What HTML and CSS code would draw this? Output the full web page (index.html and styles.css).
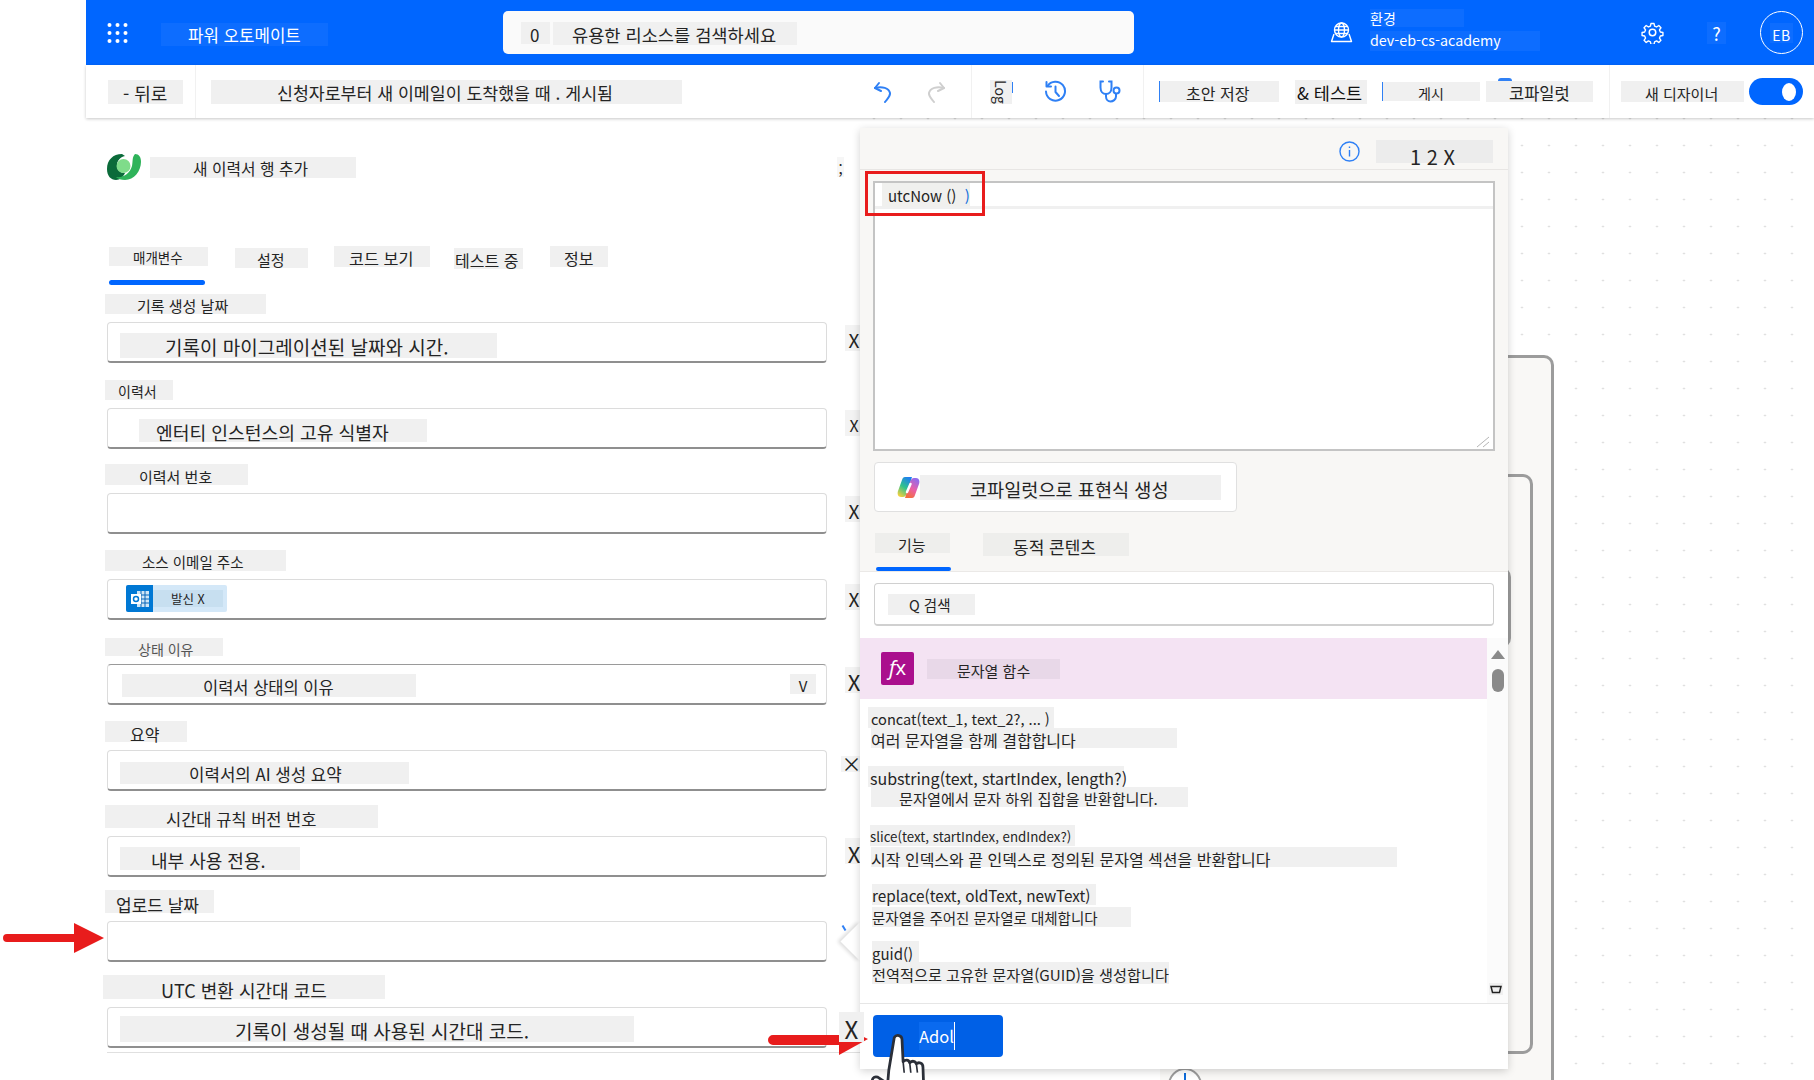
FILE: index.html
```html
<!DOCTYPE html>
<html lang="ko">

<head>
    <meta charset="UTF-8">
    <title>파워 오토메이트</title>
    <link rel="stylesheet" href="styles.css">
</head>

<body>
    <div class="app">
        <!-- 상단 파란 헤더 -->
        <header class="topbar">
            <svg class="waffle" width="21" height="20" viewBox="0 0 21 20" fill="#fff">
                <circle cx="2.5" cy="2" r="2"/><circle cx="10.5" cy="2" r="2"/><circle cx="18.5" cy="2" r="2"/>
                <circle cx="2.5" cy="10" r="2"/><circle cx="10.5" cy="10" r="2"/><circle cx="18.5" cy="10" r="2"/>
                <circle cx="2.5" cy="18" r="2"/><circle cx="10.5" cy="18" r="2"/><circle cx="18.5" cy="18" r="2"/>
            </svg>
            <div class="hl-blue brand">파워 오토메이트</div>
            <div class="searchbox">
                <span class="hl search-zero">0</span>
                <span class="hl search-text">유용한 리소스를 검색하세요</span>
            </div>
            <svg class="globe" width="23" height="21" viewBox="0 0 23 21" fill="none" stroke="#fff" stroke-width="1.4">
                <circle cx="11.5" cy="8" r="7"/>
                <ellipse cx="11.5" cy="8" rx="3" ry="7"/>
                <path d="M4.5 8h14M5.5 4.5h12M5.5 11.5h12"/>
                <path d="M4 12L1.5 19.5h20L19 12" stroke-linejoin="round"/>
            </svg>
            <div class="env">
                <div class="hl-blue env-label">환경</div>
                <div class="hl-blue env-name">dev-eb-cs-academy</div>
            </div>
            <svg class="gear" width="23" height="23" viewBox="0 0 24 24" fill="none" stroke="#fff" stroke-width="1.6" stroke-linejoin="round">
                <circle cx="12" cy="12" r="3.4"/>
                <path d="M10.2 1.6h3.6l.6 3 2.3 1 2.6-1.7 2.5 2.6-1.7 2.5 1 2.4 3 .6v3.5l-3 .6-1 2.3 1.7 2.6-2.5 2.5-2.6-1.7-2.3 1-.6 3h-3.6l-.6-3-2.3-1-2.6 1.7-2.5-2.5 1.7-2.6-1-2.3-3-.6v-3.5l3-.6 1-2.4-1.7-2.5 2.5-2.6 2.6 1.7 2.3-1z" transform="translate(1.2 1.2) scale(.9)"/>
            </svg>
            <div class="hl-blue help">?</div>
            <div class="avatar"><span class="hl-blue avatar-text">EB</span></div>
        </header>

        <!-- 도구 모음 -->
        <nav class="toolbar">
            <div class="hl back">- 뒤로</div>
            <i class="sep sep-a"></i>
            <div class="hl flow-title">신청자로부터 새 이메일이 도착했을 때 . 게시됨</div>
            <svg class="ico undo" width="20" height="22" viewBox="0 0 20 22" fill="none" stroke="#2f80f5" stroke-width="2" stroke-linecap="round" stroke-linejoin="round">
                <path d="M6 2L2 7l6 3"/>
                <path d="M2 7c7-2 14 0 15 5 .5 3-2 5-5 9"/>
            </svg>
            <svg class="ico redo" width="20" height="22" viewBox="0 0 20 22" fill="none" stroke="#cfcfcf" stroke-width="2" stroke-linecap="round" stroke-linejoin="round">
                <path d="M14 2l4 5-6 3"/>
                <path d="M18 7C11 5 4 7 3 12c-.5 3 2 5 5 9"/>
            </svg>
            <i class="sep sep-b"></i>
            <div class="hl log"><span class="log-text">Log</span></div>
            <svg class="ico history" width="23" height="23" viewBox="0 0 23 23" fill="none" stroke="#2f80f5" stroke-width="2" stroke-linecap="round" stroke-linejoin="round">
                <path d="M3.5 6A9.5 9.5 0 1 1 2 11.500"/>
                <path d="M2.500 2v4.500H7"/>
                <path d="M11.500 6.500v5.500l3.500 4"/>
            </svg>
            <svg class="ico stetho" width="24" height="23" viewBox="0 0 24 23" fill="none" stroke="#2f80f5" stroke-width="2" stroke-linecap="round">
                <path d="M5 1.500H2.500v6c0 4 2.500 6.500 5.500 6.500s5.500-2.500 5.500-6.500v-6H11"/>
                <path d="M8 14v2.500c0 3 2 5 4.500 5s5.500-2 5.500-5V14"/>
                <circle cx="18.500" cy="10.500" r="3"/>
            </svg>
            <i class="sep sep-c"></i>
            <div class="hl draft">초안 저장</div>
            <div class="hl test">&amp; 테스트</div>
            <div class="hl publish">게시</div>
            <div class="hl copilot">코파일럿</div>
            <i class="sep sep-d"></i>
            <div class="hl designer">새 디자이너</div>
            <div class="toggle"><i></i></div>
        </nav>

        <main class="workspace">
            <!-- 왼쪽 작업 설정 -->
            <section class="form">
                <div class="form-head">
                    <svg class="dv-logo" width="34" height="26" viewBox="0 0 34 26">
                        <path d="M15 0C6 0 0 6 0 15c0 7 4 11 9 11 4 0 7-3 9-7-5 0-8-3-8-8 0-4 3-8 8-9z" fill="#0b6b3a"/>
                        <path d="M28 0c4 0 6 3 6 8 0 9-7 18-16 18-4 0-7-1-9-3 8 1 14-4 16-11 1-5 0-9 3-12z" fill="#2fb35a"/>
                        <circle cx="16.500" cy="12" r="7" fill="#7fdc8a"/>
                    </svg>
                    <div class="hl head-title">새 이력서 행 추가</div>
                    <div class="hl head-more">;</div>
                </div>
                <div class="tabs">
                    <div class="hl tab-params">매개변수</div>
                    <div class="hl tab-settings">설정</div>
                    <div class="hl tab-code">코드 보기</div>
                    <div class="hl tab-test">테스트 중</div>
                    <div class="hl tab-about">정보</div>
                </div>
                <div class="tab-line"></div>

                <div class="field">
                    <div class="field-top"><label class="hl lb-created">기록 생성 날짜</label></div>
                    <div class="field-row">
                        <div class="input"><span class="hl val val-created">기록이 마이그레이션된 날짜와 시간.</span></div>
                        <span class="hl clear">X</span>
                    </div>
                </div>
                <div class="field">
                    <div class="field-top"><label class="hl lb-resume">이력서</label></div>
                    <div class="field-row">
                        <div class="input"><span class="hl val val-resume">엔터티 인스턴스의 고유 식별자</span></div>
                        <span class="hl clear clear-sm">X</span>
                    </div>
                </div>
                <div class="field">
                    <div class="field-top"><label class="hl lb-number">이력서 번호</label></div>
                    <div class="field-row">
                        <div class="input"></div>
                        <span class="hl clear">X</span>
                    </div>
                </div>
                <div class="field">
                    <div class="field-top"><label class="hl lb-source">소스 이메일 주소</label></div>
                    <div class="field-row">
                        <div class="input">
                            <div class="chip">
                                <span class="chip-icon">
                                    <svg width="20" height="18" viewBox="0 0 20 18">
                                        <rect x="7" y="1" width="12" height="16" fill="#cfe6f7"/>
                                        <path d="M7 5h12M7 9h12M7 13h12M11 1v16M15 1v16" stroke="#0a66b8" stroke-width="1"/>
                                        <rect x="1" y="4" width="10" height="10" fill="#fff"/>
                                        <circle cx="6" cy="9" r="2.500" fill="none" stroke="#0078d4" stroke-width="1.500"/>
                                    </svg>
                                </span>
                                <span class="chip-text">발신 X</span>
                            </div>
                        </div>
                        <span class="hl clear clear-low">X</span>
                    </div>
                </div>
                <div class="field">
                    <div class="field-top"><label class="hl lb-status">상태 이유</label></div>
                    <div class="field-row">
                        <div class="input input-select">
                            <span class="hl val-status">이력서 상태의 이유</span>
                            <span class="hl caret">V</span>
                        </div>
                        <span class="hl clear clear-big">X</span>
                    </div>
                </div>
                <div class="field">
                    <div class="field-top"><label class="hl lb-summary">요약</label></div>
                    <div class="field-row">
                        <div class="input"><span class="hl val val-summary">이력서의 AI 생성 요약</span></div>
                        <span class="hl clear clear-x">×</span>
                    </div>
                </div>
                <div class="field">
                    <div class="field-top"><label class="hl lb-rule">시간대 규칙 버전 번호</label></div>
                    <div class="field-row">
                        <div class="input"><span class="hl val val-rule">내부 사용 전용.</span></div>
                        <span class="hl clear clear-big">X</span>
                    </div>
                </div>
                <div class="field">
                    <div class="field-top"><label class="hl lb-upload">업로드 날짜</label></div>
                    <div class="field-row">
                        <div class="input"></div>
                        <i class="tick"></i>
                    </div>
                </div>
                <div class="field">
                    <div class="field-top"><label class="hl lb-utc">UTC 변환 시간대 코드</label></div>
                    <div class="field-row">
                        <div class="input"><span class="hl val-utc">기록이 생성될 때 사용된 시간대 코드.</span></div>
                    </div>
                </div>
                <div class="form-end"></div>
            </section>

            <!-- 캔버스 -->
            <section class="canvas">
                <div class="node node-outer"></div>
                <div class="node node-mid"></div>
                <div class="node node-inner"></div>
                <div class="add-step"></div>
            </section>

            <!-- 표현식 패널 -->
            <aside class="panel">
                <div class="panel-top">
                    <div class="panel-head">
                        <svg width="21" height="21" viewBox="0 0 21 21" fill="none" stroke="#2f80f5" stroke-width="1.400">
                            <circle cx="10.500" cy="10.500" r="9.500"/>
                            <path d="M10.500 9v6.500M10.500 5.500v1.500"/>
                        </svg>
                        <div class="hl panel-close">1 2 X</div>
                    </div>
                    <div class="expr">
                        <div class="expr-line">
                            <span class="expr-chip">utcNow () <b>)</b></span>
                        </div>
                        <svg class="grip" width="14" height="12" viewBox="0 0 14 12" stroke="#b5b5b5" fill="none">
                            <path d="M1 11L13 1M7 11l6-5"/>
                        </svg>
                    </div>
                    <div class="copilot-btn">
                        <svg width="23" height="23" viewBox="0 0 23 23">
                            <defs>
                                <linearGradient id="cpA" x1="0.700" y1="0" x2="0.200" y2="1">
                                    <stop offset="0" stop-color="#1f7ff0"/>
                                    <stop offset=".5" stop-color="#2fc28c"/>
                                    <stop offset="1" stop-color="#f7d13c"/>
                                </linearGradient>
                                <linearGradient id="cpB" x1="0.800" y1="0" x2="0.300" y2="1">
                                    <stop offset="0" stop-color="#8a6cf2"/>
                                    <stop offset=".55" stop-color="#ea5fa6"/>
                                    <stop offset="1" stop-color="#f4703a"/>
                                </linearGradient>
                            </defs>
                            <path d="M8 1h7l-5 16c-.7 2-2 4-4 4H4c-3 0-4-3-3-6L5 4c.5-2 1.500-3 3-3z" fill="url(#cpA)"/>
                            <path d="M15 22H8l5-16c.7-2 2-4 4-4h2c3 0 4 3 3 6l-4 11c-.5 2-1.500 3-3 3z" fill="url(#cpB)"/>
                            <path d="M13.500 8l-3.500 8" stroke="#fff" stroke-width="2.500" stroke-linecap="round"/>
                        </svg>
                        <div class="hl copilot-text">코파일럿으로 표현식 생성</div>
                    </div>
                    <div class="panel-tabs">
                        <div class="hl ptab-fn">기능</div>
                        <div class="hl ptab-dyn">동적 콘텐츠</div>
                    </div>
                    <div class="ptab-line"></div>
                </div>
                <div class="panel-search-wrap">
                    <div class="input panel-search"><span class="hl search-q">Q 검색</span></div>
                </div>
                <div class="fn-area">
                    <div class="fn-main">
                        <div class="fn-head">
                            <span class="fx"><i>f</i>x</span>
                            <span class="fn-title">문자열 함수</span>
                        </div>
                        <div class="fn-item fn-concat">
                            <div class="hl sig">concat(text_1, text_2?, ... )</div>
                            <div class="hl desc">여러 문자열을 함께 결합합니다</div>
                        </div>
                        <div class="fn-item fn-sub">
                            <div class="hl sig">substring(text, startIndex, length?)</div>
                            <div class="hl desc">문자열에서 문자 하위 집합을 반환합니다.</div>
                        </div>
                        <div class="fn-item fn-slice">
                            <div class="hl sig">slice(text, startIndex, endIndex?)</div>
                            <div class="hl desc">시작 인덱스와 끝 인덱스로 정의된 문자열 섹션을 반환합니다</div>
                        </div>
                        <div class="fn-item fn-replace">
                            <div class="hl sig">replace(text, oldText, newText)</div>
                            <div class="hl desc">문자열을 주어진 문자열로 대체합니다</div>
                        </div>
                        <div class="fn-item fn-guid">
                            <div class="hl sig">guid()</div>
                            <div class="hl desc">전역적으로 고유한 문자열(GUID)을 생성합니다</div>
                        </div>
                    </div>
                    <div class="fn-scroll">
                        <i class="arrow-up"></i>
                        <i class="thumb"></i>
                        <span class="arrow-down">
                            <svg width="12" height="9" viewBox="0 0 12 9" fill="none" stroke="#222" stroke-width="1.500">
                                <path d="M1 1.500h10L9.500 7.500h-7z"/>
                            </svg>
                        </span>
                    </div>
                </div>
                <div class="panel-foot">
                    <button class="add-btn"><span>Adol</span></button>
                </div>
            </aside>
            <div class="notch"></div>

            <!-- 표시 -->
            <div class="red-box"></div>
            <svg class="red-arrow arrow-a" width="101" height="30" viewBox="0 0 101 30">
                <path d="M4 11h67V0l30 15-30 15V19H4a4 4 0 0 1 0-8z" fill="#e81c1c"/>
            </svg>
            <svg class="red-arrow arrow-b" width="100" height="30" viewBox="0 0 100 30">
                <path d="M5 10h66V0l29 14-29 16V20H5a5 5 0 0 1 0-10z" fill="#e81c1c"/>
            </svg>
            <div class="hl clear-over">X</div>
            <svg class="hand" width="62" height="64" viewBox="0 0 56 58">
                <path d="M21 4c2-3 7-2 7 2l1 20c2-2 5-2 6 1 2-2 5-2 6 1 2-2 6-1 6 3l1 27H14c-3-6-7-9-12-13-2-3 0-6 4-5l9 6 1-12z" fill="#fff" stroke="#2b2f38" stroke-width="2.500" stroke-linejoin="round"/>
                <path d="M29 26l1 10M35 27l1 9M41 28l1 8" stroke="#2b2f38" stroke-width="1.500" fill="none"/>
            </svg>
        </main>
    </div>
</body>

</html>
```

FILE: styles.css
```css
* {
    margin: 0;
    padding: 0;
    box-sizing: border-box;
}

html,
body {
    width: 1814px;
    height: 1080px;
    overflow: hidden;
    background: #fff;
    font-family: "Noto Sans CJK KR", "Noto Sans", sans-serif;
    color: #242424;
}

.app {
    margin-left: 86px;
    width: 1728px;
    height: 1080px;
    display: flex;
    flex-direction: column;
}

/* 번역 자국처럼 글자 뒤에 깔린 회색 띠 */
.hl {
    display: flex;
    align-items: center;
    background: #f0f0f0;
    white-space: nowrap;
    flex: none;
    line-height: 1;
    padding-top: 3px;
}

.hl-blue {
    display: flex;
    align-items: center;
    background: #0d6dff;
    color: #fff;
    white-space: nowrap;
    flex: none;
    line-height: 1;
}

/* 헤더 */
.topbar {
    height: 65px;
    flex: none;
    background: #0066ff;
    display: flex;
    align-items: center;
}

.waffle {
    margin-left: 21px;
    flex: none;
}

.brand {
    margin: 3px 0 0 33px;
    width: 167px;
    height: 23px;
    padding: 2px 0 0 27px;
    font-size: 16.800px;
}

.searchbox {
    margin-left: 175px;
    width: 631px;
    height: 43px;
    background: #fafafa;
    border-radius: 5px;
    display: flex;
    align-items: center;
    flex: none;
    padding: 1px 0 0 18px;
}

.search-zero {
    width: 29px;
    height: 22px;
    padding-left: 9px;
    font-size: 17px;
}

.search-text {
    margin-left: 3px;
    width: 244px;
    height: 23px;
    padding-left: 19px;
    font-size: 17.600px;
}

.globe {
    margin-left: 196px;
    flex: none;
}

.env {
    margin: -6px 0 0 17px;
    width: 170px;
    flex: none;
    display: flex;
    flex-direction: column;
    gap: 4px;
}

.env-label {
    width: 94px;
    height: 18px;
    font-size: 14px;
}

.env-name {
    width: 170px;
    height: 20px;
    font-size: 14.300px;
}

.gear {
    margin-left: 101px;
    flex: none;
}

.help {
    margin-left: 43px;
    width: 19px;
    height: 22px;
    justify-content: center;
    font-size: 18px;
}

.avatar {
    margin-left: 34px;
    width: 43px;
    height: 43px;
    border: 1px solid #fff;
    border-radius: 50%;
    flex: none;
    display: flex;
    align-items: center;
    justify-content: center;
}

.avatar-text {
    font-size: 14px;
    padding: 5px 2px 1px;
    letter-spacing: .5px;
}

/* 도구 모음 */
.toolbar {
    height: 53px;
    flex: none;
    display: flex;
    align-items: center;
    background: #fff;
    box-shadow: 0 1px 3px rgba(0, 0, 0, .22);
    position: relative;
    z-index: 5;
    font-size: 15px;
}

.sep {
    width: 1px;
    height: 53px;
    background: #f1f1f1;
    flex: none;
}

.ico {
    flex: none;
}

.back {
    margin-left: 22px;
    width: 75px;
    height: 24px;
    padding-left: 15px;
    font-size: 18px;
}

.sep-a {
    margin-left: 12px;
}

.flow-title {
    margin-left: 15px;
    width: 471px;
    height: 24px;
    padding-left: 66px;
    font-size: 17.300px;
}

.undo {
    margin-left: 191px;
}

.redo {
    margin-left: 33px;
}

.sep-b {
    margin-left: 25px;
}

.log {
    margin-left: 18px;
    width: 22px;
    height: 24px;
    padding-top: 0;
    justify-content: center;
    position: relative;
}

.log::after {
    content: "";
    position: absolute;
    right: -1px;
    top: 2px;
    width: 1px;
    height: 11px;
    background: #2f80f5;
}

.log-text {
    display: block;
    transform: rotate(90deg);
    font-size: 14px;
}

.history {
    margin-left: 32px;
}

.stetho {
    margin-left: 31px;
}

.sep-c {
    margin-left: 21px;
}

.draft {
    margin-left: 15px;
    width: 120px;
    height: 21px;
    padding-left: 26px;
    font-size: 16px;
    border-left: 1px solid #2f80f5;
}

.test {
    margin-left: 16px;
    width: 72px;
    height: 24px;
    padding-left: 2px;
    font-size: 17.500px;
    color: #111;
}

.publish {
    margin-left: 15px;
    width: 98px;
    height: 19px;
    padding-left: 35px;
    font-size: 14px;
    border-left: 1px solid #2f80f5;
}

.copilot {
    margin-left: 6px;
    width: 107px;
    height: 21px;
    padding-left: 23px;
    font-size: 16.500px;
    position: relative;
}

.copilot::before {
    content: "";
    position: absolute;
    left: 12px;
    top: -3px;
    width: 14px;
    height: 3px;
    border-radius: 3px 3px 0 0;
    background: #2f80f5;
}

.sep-d {
    margin-left: 16px;
}

.designer {
    margin-left: 11px;
    width: 123px;
    height: 21px;
    padding-left: 24px;
    font-size: 15px;
}

.toggle {
    margin-left: 5px;
    width: 54px;
    height: 27px;
    background: #0066ff;
    border-radius: 14px;
    flex: none;
    display: flex;
    align-items: center;
    justify-content: flex-end;
    padding-right: 7px;
}

.toggle i {
    width: 14px;
    height: 18px;
    background: #fff;
    border-radius: 50%;
}

/* 작업 영역 */
.workspace {
    flex: 1;
    display: flex;
    position: relative;
    min-height: 0;
}

.form {
    width: 774px;
    flex: none;
    padding-left: 21px;
    background: #fff;
    position: relative;
    z-index: 2;
}

.form-head {
    margin-top: 36px;
    display: flex;
    align-items: center;
    height: 26px;
}

.dv-logo {
    flex: none;
}

.head-title {
    margin-left: 9px;
    width: 206px;
    height: 21px;
    padding-left: 43px;
    font-size: 15.800px;
}

.head-more {
    margin-left: 481px;
    width: 7px;
    height: 20px;
    justify-content: center;
    font-size: 15px;
    background: #f6f6f6;
}

.tabs {
    margin-top: 66px;
    display: flex;
    align-items: flex-start;
    height: 24px;
    margin-left: 2px;
}

.tab-params {
    width: 99px;
    height: 19px;
    margin-top: 1px;
    padding-left: 24px;
    font-size: 13.500px;
}

.tab-settings {
    margin: 2px 0 0 27px;
    width: 73px;
    height: 20px;
    padding-left: 22px;
    font-size: 15px;
}

.tab-code {
    margin-left: 26px;
    width: 96px;
    height: 21px;
    padding-left: 15px;
    font-size: 16.300px;
}

.tab-test {
    margin: 2px 0 0 24px;
    width: 69px;
    height: 21px;
    padding-left: 1px;
    font-size: 16px;
}

.tab-about {
    margin-left: 27px;
    width: 58px;
    height: 21px;
    padding-left: 14px;
    font-size: 16px;
}

.tab-line {
    margin: 10px 0 -8px 2px;
    width: 96px;
    height: 5px;
    border-radius: 3px;
    background: #0066ff;
}

.field {
    height: 85.600px;
    width: 760px;
}

.field-top {
    height: 45px;
    margin-left: -2px;
    display: flex;
    align-items: flex-end;
    padding-bottom: 8px;
}

.field-row {
    display: flex;
    align-items: center;
}

.input {
    width: 720px;
    height: 41px;
    background: #fff;
    border: 1px solid #dcdcdc;
    border-bottom: 2px solid #8f8f8f;
    border-radius: 4px;
    display: flex;
    align-items: center;
    padding-left: 12px;
    flex: none;
}

.input-select {
    padding-left: 14px;
    justify-content: space-between;
    padding-right: 10px;
    border-top-color: #9a9a9a;
}

.clear {
    margin: -10px 0 0 18px;
    width: 18px;
    height: 26px;
    justify-content: center;
    font-size: 19px;
    background: #f3f3f3;
}

.clear-sm {
    font-size: 16px;
}

.clear-low {
    margin-top: -5px;
}

.clear-big {
    font-size: 22px;
}

.clear-x {
    margin: -13px 0 0 14px;
    height: 16px;
    width: 21px;
    font-size: 20px;
    padding-top: 0;
}

.tick {
    margin: -28px 0 0 16px;
    width: 2px;
    height: 6px;
    background: #2f80f5;
    transform: rotate(-30deg);
}

.lb-created {
    width: 161px;
    height: 20px;
    padding-left: 32px;
    font-size: 15px;
}

.lb-resume {
    width: 68px;
    height: 20px;
    padding-left: 13px;
    font-size: 14px;
}

.lb-number {
    width: 143px;
    height: 21px;
    padding-left: 34px;
    font-size: 15px;
}

.lb-source {
    width: 181px;
    height: 21px;
    padding-left: 37px;
    font-size: 14.500px;
}

.lb-status {
    width: 118px;
    height: 18px;
    padding-left: 33px;
    font-size: 14px;
    color: #555;
}

.lb-summary {
    width: 82px;
    height: 21px;
    padding: 5px 0 0 25px;
    font-size: 16px;
}

.lb-rule {
    width: 273px;
    height: 23px;
    padding: 6px 0 0 61px;
    font-size: 16.500px;
}

.lb-upload {
    width: 109px;
    height: 23px;
    padding: 6px 0 0 11px;
    font-size: 17px;
}

.lb-utc {
    width: 282px;
    height: 24px;
    padding: 6px 0 0 58px;
    margin-left: -2px;
    font-size: 18px;
}

.val {
    margin-top: 6px;
}

.val-created {
    width: 377px;
    height: 25px;
    padding-left: 45px;
    font-size: 19px;
}

.val-resume {
    width: 288px;
    height: 23px;
    padding-left: 17px;
    margin-left: 19px;
    font-size: 18.200px;
}

.val-status {
    margin-top: 3px;
    width: 294px;
    height: 23px;
    padding-left: 81px;
    font-size: 16.500px;
}

.caret {
    width: 26px;
    height: 20px;
    justify-content: center;
    font-size: 15px;
}

.val-summary {
    width: 289px;
    height: 22px;
    padding-left: 69px;
    font-size: 16.800px;
}

.val-rule {
    width: 180px;
    height: 23px;
    padding-left: 31px;
    font-size: 18px;
}

.val-utc {
    margin-top: 5px;
    width: 514px;
    height: 26px;
    padding-left: 115px;
    font-size: 19px;
}

.chip {
    margin-left: 6px;
    width: 101px;
    height: 27px;
    background: #d4e8f8;
    border-radius: 2px;
    display: flex;
    align-items: center;
}

.chip-icon {
    width: 27px;
    height: 27px;
    background: #0078d4;
    border-radius: 2px 0 0 2px;
    display: flex;
    align-items: center;
    justify-content: center;
    flex: none;
}

.chip-text {
    width: 70px;
    height: 17px;
    background: #c7dff0;
    padding-left: 18px;
    font-size: 12.500px;
    line-height: 17px;
    white-space: nowrap;
}

.form-end {
    margin-top: 5px;
    width: 753px;
    height: 1px;
    background: #e0e0e0;
}

/* 캔버스: 점 격자 위의 노드 */
.canvas {
    flex: 1;
    position: relative;
    overflow: hidden;
    background-color: #fff;
    background-image: radial-gradient(circle, #d0d0d0 .8px, transparent 1.100px);
    background-size: 27px 27px;
    background-position: .5px 14px;
}

.node {
    position: absolute;
    border: 3px solid #9c9c9c;
    border-left: 0;
    border-radius: 0 10px 10px 0;
    background: #f9f8f6;
}

.node-outer {
    left: 300px;
    top: 237px;
    width: 394px;
    height: 900px;
}

.node-mid {
    left: 300px;
    top: 356px;
    width: 373px;
    height: 580px;
}

.node-inner {
    left: 300px;
    top: 449px;
    width: 351px;
    height: 81px;
    background: #fff;
}

.add-step {
    position: absolute;
    left: 308px;
    top: 950px;
    width: 34px;
    height: 34px;
    border: 2px solid #9c9c9c;
    border-radius: 50%;
    background: #fff;
}

.add-step::after {
    content: "";
    position: absolute;
    left: 14px;
    top: 3px;
    width: 2px;
    height: 14px;
    background: #0f6cdb;
}

/* 표현식 패널 */
.panel {
    position: absolute;
    left: 774px;
    top: 10px;
    width: 648px;
    height: 941px;
    background: #fff;
    box-shadow: 0 2px 8px rgba(0, 0, 0, .18);
    border-radius: 2px;
    display: flex;
    flex-direction: column;
    z-index: 3;
}

.panel-top {
    height: 444px;
    flex: none;
    background: #f8f7f5;
    border-bottom: 1px solid #ebe9e7;
    padding-left: 13px;
}

.panel-head {
    height: 42px;
    margin-left: -13px;
    border-bottom: 1px solid #e8e6e4;
    display: flex;
    align-items: center;
    justify-content: flex-end;
    padding: 6px 15px 0 0;
    gap: 16px;
}

.panel-close {
    width: 117px;
    height: 23px;
    padding: 11px 0 0 34px;
    font-size: 20px;
    background: #ececec;
}

.expr {
    margin-top: 11px;
    width: 622px;
    height: 270px;
    background: #fff;
    border: 2px solid #c4c4c4;
    position: relative;
}

.expr-line {
    height: 26px;
    border-bottom: 3px solid #f0f0f0;
    padding-left: 7px;
}

.expr-chip {
    display: inline-block;
    width: 88px;
    height: 24px;
    padding-left: 6px;
    background: #f0f0ee;
    font-size: 15px;
    line-height: 26px;
    white-space: nowrap;
}

.expr-chip b {
    font-weight: 400;
    color: #0f6cdb;
    margin-left: 4px;
}

.grip {
    position: absolute;
    right: 3px;
    bottom: 1px;
}

.copilot-btn {
    margin: 11px 0 0 1px;
    width: 363px;
    height: 50px;
    background: #fff;
    border: 1px solid #e0e0e0;
    border-radius: 4px;
    display: flex;
    align-items: center;
    padding-left: 22px;
}

.copilot-btn svg {
    flex: none;
}

.copilot-text {
    width: 301px;
    height: 25px;
    padding-left: 50px;
    font-size: 18.600px;
    margin-top: 1px;
}

.panel-tabs {
    margin: 21px 0 0 2px;
    display: flex;
    align-items: flex-start;
}

.ptab-fn {
    width: 75px;
    height: 20px;
    padding-left: 23px;
    font-size: 15px;
    background: #eeeeec;
}

.ptab-dyn {
    margin-left: 33px;
    width: 146px;
    height: 23px;
    padding-left: 30px;
    font-size: 17px;
    background: #eeeeec;
}

.ptab-line {
    margin: 11px 0 0 3px;
    width: 75px;
    height: 4px;
    border-radius: 2px;
    background: #0066ff;
}

.panel-search-wrap {
    height: 66px;
    flex: none;
    padding: 11px 0 0 14px;
}

.panel-search {
    width: 620px;
    height: 43px;
    padding-left: 13px;
    border-color: #d0d0d0;
}

.search-q {
    width: 87px;
    height: 21px;
    padding-left: 21px;
    font-size: 14.500px;
}

.fn-area {
    height: 366px;
    flex: none;
    display: flex;
    border-bottom: 1px solid #e6e6e6;
}

.fn-main {
    width: 627px;
    flex: none;
}

.fn-head {
    height: 61px;
    background: #f4e3f3;
    display: flex;
    align-items: center;
    padding-left: 21px;
}

.fx {
    width: 33px;
    height: 33px;
    background: #aa0f8d;
    border-radius: 2px;
    color: #fff;
    font-size: 20px;
    font-family: "Noto Sans", sans-serif;
    text-align: center;
    line-height: 32px;
    flex: none;
}

.fn-title {
    margin-left: 13px;
    width: 133px;
    height: 20px;
    padding-left: 30px;
    background: #e8d8e8;
    font-size: 15px;
    line-height: 23px;
}

.fn-item {
    padding-left: 8px;
}

.sig {
    height: 21px;
    font-size: 14.500px;
}

.desc {
    height: 20px;
    font-size: 14.500px;
}

.fn-concat {
    padding-top: 8px;
}

.fn-concat .sig {
    width: 186px;
    padding-left: 3px;
    font-size: 14.600px;
}

.fn-concat .desc {
    margin-left: 3px;
    width: 306px;
    font-size: 16px;
}

.fn-sub {
    padding-top: 18px;
}

.fn-sub .sig {
    width: 256px;
    padding-left: 2px;
    font-size: 16px;
}

.fn-sub .desc {
    margin-left: 3px;
    width: 317px;
    padding-left: 28px;
    font-size: 15.200px;
}

.fn-slice {
    padding-top: 18px;
}

.fn-slice .sig {
    margin-left: 2px;
    width: 205px;
    font-size: 13.300px;
}

.fn-slice .desc {
    margin: 1px 0 0 3px;
    width: 526px;
    font-size: 16px;
}

.fn-replace {
    padding-top: 17px;
}

.fn-replace .sig {
    margin-left: 4px;
    width: 224px;
    font-size: 15.300px;
}

.fn-replace .desc {
    margin: 2px 0 0 4px;
    width: 259px;
}

.fn-guid {
    padding-top: 14px;
}

.fn-guid .sig {
    margin-left: 4px;
    width: 47px;
    font-size: 15px;
}

.fn-guid .desc {
    margin-left: 4px;
    width: 297px;
    height: 22px;
    font-size: 15.200px;
}

.fn-scroll {
    flex: 1;
    background: #fbfbfb;
    position: relative;
}

.arrow-up {
    position: absolute;
    left: 4px;
    top: 12px;
    border-left: 7px solid transparent;
    border-right: 7px solid transparent;
    border-bottom: 9px solid #8a8a8a;
}

.thumb {
    position: absolute;
    left: 5px;
    top: 31px;
    width: 12px;
    height: 23px;
    border-radius: 6px;
    background: #8a8a8a;
}

.arrow-down {
    position: absolute;
    left: 2px;
    top: 345px;
    width: 14px;
    height: 12px;
    background: #f0f0f0;
    display: flex;
    align-items: center;
    justify-content: center;
}

.panel-foot {
    flex: 1;
    padding: 11px 0 0 13px;
    background: #fff;
}

.add-btn {
    width: 130px;
    height: 42px;
    background: #0060e6;
    border: 0;
    border-radius: 4px;
    color: #fff;
    font-family: inherit;
    font-size: 16.500px;
    text-align: left;
    padding-left: 46px;
}

.add-btn span {
    background: #0a6aef;
    padding: 2px 0;
    border-right: 1px solid #fff;
}

.notch {
    position: absolute;
    left: 760px;
    top: 810px;
    width: 27px;
    height: 27px;
    background: #fff;
    transform: rotate(45deg);
    box-shadow: -2px 2px 4px rgba(0, 0, 0, .14);
    z-index: 2;
}

/* 빨간 표시 */
.red-box {
    position: absolute;
    left: 779px;
    top: 53px;
    width: 120px;
    height: 45px;
    border: 3px solid #e81c1c;
    z-index: 6;
}

.red-arrow {
    position: absolute;
    z-index: 6;
}

.arrow-a {
    left: -83px;
    top: 805px;
}

.arrow-b {
    left: 682px;
    top: 907px;
}

.clear-over {
    position: absolute;
    left: 753px;
    top: 894px;
    width: 25px;
    height: 30px;
    justify-content: center;
    font-size: 24px;
    z-index: 7;
}

.hand {
    position: absolute;
    left: 785px;
    top: 915px;
    z-index: 8;
}
```
